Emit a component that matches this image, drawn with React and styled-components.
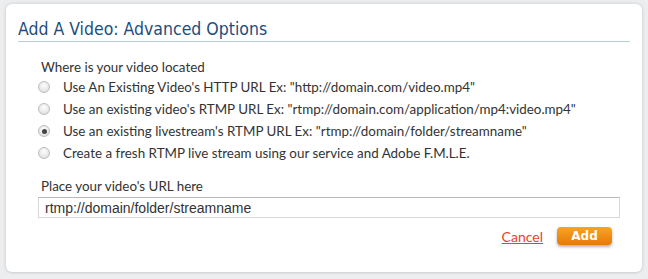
import React, { useState } from "react";
import styled, { createGlobalStyle } from "styled-components";

const Global = createGlobalStyle`
  html, body { margin: 0; padding: 0; background: #eceef0; }
  body { font-family: "Lato", "Liberation Sans", sans-serif; }
  * { box-sizing: border-box; }
`;

const Page = styled.div`
  width: 648px;
  height: 279px;
  padding: 4px 6px 7px 6px;
`;

const Panel = styled.div`
  background: #fff;
  height: 268px;
  border-radius: 6px;
  box-shadow: 0 0 4px rgba(0, 0, 0, 0.14), 0 1px 2px rgba(0, 0, 0, 0.06);
  padding-top: 14px;
  display: flex;
  flex-direction: column;
`;

const Title = styled.h1`
  margin: 0 12px 0 12px;
  padding: 0 0 1px 0;
  font-family: "DejaVu Sans Condensed", "DejaVu Sans", "Liberation Sans", sans-serif;
  font-stretch: condensed;
  font-weight: normal;
  font-size: 17.5px;
  line-height: 22px;
  color: #1d4d7d;
  border-bottom: 1px solid #b9cdd6;
`;

const Body = styled.div`
  padding: 16px 22px 0 32px;
  display: flex;
  flex-direction: column;
`;

const Label = styled.div`
  font-size: 13.4px;
  line-height: 18px;
  color: #333;
  padding-left: ${(p) => p.$indent || 0}px;
  margin-top: ${(p) => p.$mt || 0}px;
`;

const Row = styled.label`
  display: flex;
  align-items: center;
  height: 22px;
  padding-left: 0;
  gap: 13px;
  font-size: 13.4px;
  color: #333;
  cursor: pointer;
`;

const Radio = styled.span`
  width: 12px;
  height: 12px;
  border-radius: 50%;
  border: 1px solid #bcbcbc;
  background: radial-gradient(circle at 50% 35%, #fdfdfd 0%, #e8e8e8 60%, #d8d8d8 100%);
  display: flex;
  align-items: center;
  justify-content: center;
  flex: none;
  &::after {
    content: "";
    width: 5px;
    height: 5px;
    border-radius: 50%;
    background: ${(p) => (p.$checked ? "#444" : "transparent")};
  }
`;

const Input = styled.input`
  margin-top: 2px;
  width: 582px;
  height: 21px;
  border: 1px solid #d8d8d8;
  border-top-color: #b8b8b8;
  padding: 0 6px;
  font-family: "Liberation Sans", Arial, sans-serif;
  font-size: 14px;
  color: #333;
  outline: none;
`;

const Actions = styled.div`
  display: flex;
  justify-content: flex-end;
  align-items: center;
  gap: 14px;
  margin-top: 9px;
  padding-right: 8px;
`;

const Cancel = styled.a`
  font-size: 14px;
  color: #e5432b;
  text-decoration: underline;
  cursor: pointer;
`;

const AddButton = styled.button`
  width: 55px;
  height: 18px;
  border: none;
  border-radius: 4px;
  background: linear-gradient(#f9a423, #e57a08);
  box-shadow: 0 2px 3px rgba(0, 0, 0, 0.3);
  color: #fff;
  font-family: "DejaVu Sans", sans-serif;
  font-weight: bold;
  font-size: 12px;
  padding: 0;
  cursor: pointer;
`;

const options = [
  'Use An Existing Video\'s HTTP URL Ex: "http://domain.com/video.mp4"',
  'Use an existing video\'s RTMP URL Ex: "rtmp://domain.com/application/mp4:video.mp4"',
  'Use an existing livestream\'s RTMP URL Ex: "rtmp://domain/folder/streamname"',
  "Create a fresh RTMP live stream using our service and Adobe F.M.L.E.",
];

export default function App() {
  const [sel, setSel] = useState(2);
  return (
    <Page>
      <Global />
      <Panel>
        <Title>Add A Video: Advanced Options</Title>
        <Body>
          <Label $indent={3}>Where is your video located</Label>
          {options.map((o, i) => (
            <Row key={i} onClick={() => setSel(i)}>
              <Radio $checked={sel === i} />
              <span>{o}</span>
            </Row>
          ))}
          <Label $indent={3} $mt={13}>Place your video's URL here</Label>
          <Input defaultValue="rtmp://domain/folder/streamname" />
          <Actions>
            <Cancel>Cancel</Cancel>
            <AddButton>Add</AddButton>
          </Actions>
        </Body>
      </Panel>
    </Page>
  );
}
